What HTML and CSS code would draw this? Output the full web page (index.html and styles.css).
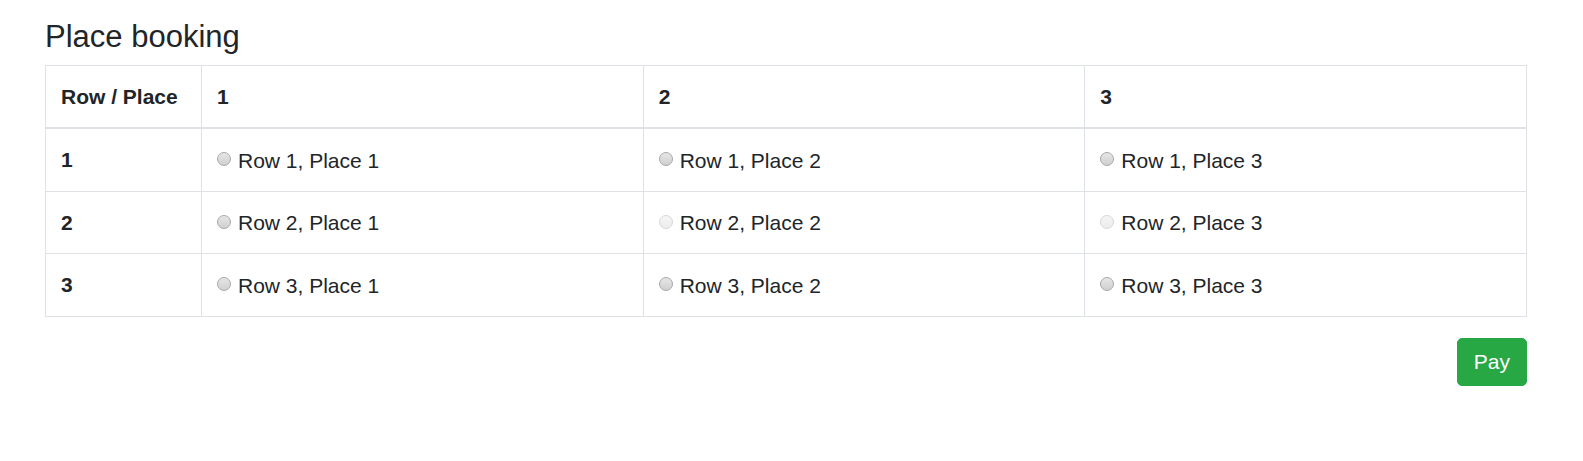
FILE: index.html
```html
<!DOCTYPE html>
<html lang="en">
<head>
<meta charset="utf-8">
<title>Place booking</title>
<link rel="stylesheet" href="styles.css">
</head>
<body>
<div class="page">
  <h3 class="title">Place booking</h3>
  <table class="booking">
    <colgroup>
      <col class="col-head">
      <col>
      <col>
      <col>
    </colgroup>
    <thead>
      <tr>
        <th>Row / Place</th>
        <th>1</th>
        <th>2</th>
        <th>3</th>
      </tr>
    </thead>
    <tbody>
      <tr>
        <th>1</th>
        <td><label class="seat"><input type="radio" name="seat"> Row 1, Place 1</label></td>
        <td><label class="seat"><input type="radio" name="seat"> Row 1, Place 2</label></td>
        <td><label class="seat"><input type="radio" name="seat"> Row 1, Place 3</label></td>
      </tr>
      <tr>
        <th>2</th>
        <td><label class="seat"><input type="radio" name="seat"> Row 2, Place 1</label></td>
        <td><label class="seat"><input type="radio" name="seat" disabled> Row 2, Place 2</label></td>
        <td><label class="seat"><input type="radio" name="seat" disabled> Row 2, Place 3</label></td>
      </tr>
      <tr>
        <th>3</th>
        <td><label class="seat"><input type="radio" name="seat"> Row 3, Place 1</label></td>
        <td><label class="seat"><input type="radio" name="seat"> Row 3, Place 2</label></td>
        <td><label class="seat"><input type="radio" name="seat"> Row 3, Place 3</label></td>
      </tr>
    </tbody>
  </table>
  <div class="actions">
    <button class="btn-pay" type="button">Pay</button>
  </div>
</div>
</body>
</html>
```

FILE: styles.css
```css
html, body {
  margin: 0;
  padding: 0;
  background: #fff;
}

body {
  font-family: "Liberation Sans", Arial, sans-serif;
  font-size: 16px;
  line-height: 1.5;
  color: #212529;
}

.page {
  padding: 18px 56px 0 45px;
}

.title {
  margin: 0 0 10px 0;
  font-size: 31px;
  font-weight: 400;
  line-height: 37px;
}

.booking {
  width: 100%;
  table-layout: fixed;
  border-collapse: collapse;
  font-size: 21px;
  line-height: 31px;
}

.col-head {
  width: 156px;
}

.booking th,
.booking td {
  border: 1px solid #dee2e6;
  padding: 15px 15px;
  text-align: left;
  vertical-align: top;
  white-space: nowrap;
}

.booking th {
  font-weight: 700;
}

.booking thead th {
  border-bottom: 2px solid #dee2e6;
  vertical-align: bottom;
}

.seat {
  display: inline-flex;
  align-items: center;
  gap: 7px;
}

.seat input {
  appearance: none;
  -webkit-appearance: none;
  margin: 0;
  width: 14px;
  height: 14px;
  border-radius: 50%;
  border: 1px solid #a9a9a9;
  background: linear-gradient(#e6e6e6, #d0d0d0);
  box-sizing: border-box;
  flex: none;
  position: relative;
  top: -1px;
}

.seat input:disabled {
  border-color: #d8d8d8;
  background: linear-gradient(#f5f5f5, #ececec);
}

.actions {
  display: flex;
  justify-content: flex-end;
  margin-top: 21px;
}

.btn-pay {
  font-family: "Liberation Sans", Arial, sans-serif;
  font-size: 21px;
  line-height: 32px;
  padding: 7px 16px;
  color: #fff;
  background: #28a745;
  border: 1px solid #28a745;
  border-radius: 5px;
  cursor: pointer;
}
```
